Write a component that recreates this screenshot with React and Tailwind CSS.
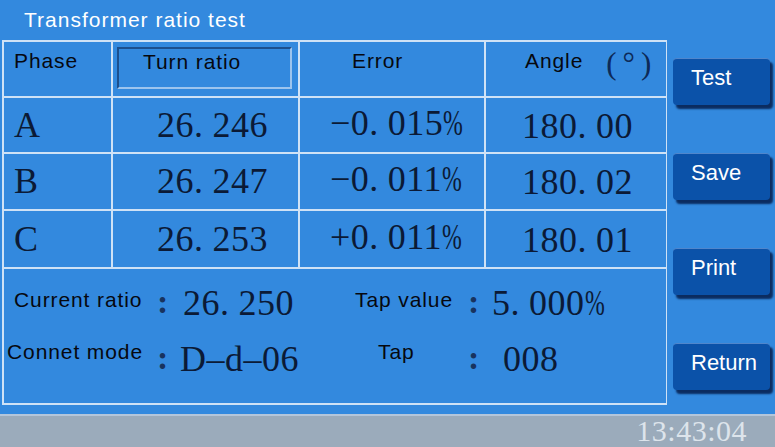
import React from "react";

const SANS = "font-['Liberation_Sans',Arial,sans-serif]";
const SERIF = "font-['Liberation_Serif','Times_New_Roman',serif]";

function Num({ v }) {
  const parts = [];
  v.split("").forEach((c, i) => {
    if (c === ".") {
      parts.push(
        <span key={i} className="mr-[9px]">
          .
        </span>
      );
    } else if (c === "%") {
      parts.push(
        <span key={i} className="inline-block w-[21px] origin-left scale-x-[0.66]">
          %
        </span>
      );
    } else {
      parts.push(<span key={i}>{c}</span>);
    }
  });
  return (
    <span className={`${SERIF} text-[36px] leading-none tracking-[0.5px] text-[#0b1a36] whitespace-nowrap`}>
      {parts}
    </span>
  );
}

function Cell({ children, className = "" }) {
  return <div className={`bg-[#3389de] flex ${className}`}>{children}</div>;
}

function Btn({ label }) {
  return (
    <div className="w-[97px] h-[47px] rounded-[4px] bg-[#0b52a9] border-t border-[#5086cc] shadow-[3px_4px_2px_#0b2c60] flex items-center pl-[18px] pb-[8px]">
      <span className={`${SANS} text-[22px] leading-none text-white`}>{label}</span>
    </div>
  );
}

const rows = [
  { p: "A", r: "26.246", e: "−0.015%", a: "180.00" },
  { p: "B", r: "26.247", e: "−0.011%", a: "180.02" },
  { p: "C", r: "26.253", e: "+0.011%", a: "180.01" },
];

export default function App() {
  const label = `${SANS} text-[21px] leading-none tracking-[0.9px] text-[#06080f]`;
  const colon = `${SERIF} font-bold text-[34px] leading-none text-[#18335e]`;
  return (
    <div className="w-[775px] h-[447px] bg-[#3389de] flex flex-col overflow-hidden">
      <div className="h-[40px] flex items-center pl-[24px] pb-[1px]">
        <span className={`${SANS} text-[21px] leading-none tracking-[1px] text-white`}>
          Transformer ratio test
        </span>
      </div>
      <div className="flex h-[378px]">
        <div className="ml-[2px] w-[665px] h-[365px] bg-[#cfe2f6] p-[2px] grid grid-cols-[107px_185px_184px_180px] grid-rows-[54px_54px_55px_56px_134px] gap-[2px]">
          {/* header */}
          <Cell className="pl-[10px] pt-[8px] items-start">
            <span className={label}>Phase</span>
          </Cell>
          <Cell className="pl-[4px] pr-[6px] pt-[5px] pb-[7px]">
            <div className="w-full h-full border-2 border-t-[#1d4f8c] border-l-[#1d4f8c] border-b-[#9cc4ee] border-r-[#9cc4ee] pl-[24px] pt-[2px]">
              <span className={label}>Turn ratio</span>
            </div>
          </Cell>
          <Cell className="pl-[52px] pt-[8px] items-start">
            <span className={label}>Error</span>
          </Cell>
          <Cell className="pl-[39px] pt-[6px] items-start">
            <span className={label + " mt-[2px]"}>Angle</span>
            <span className={`${SERIF} ml-[23px] text-[31px] leading-none text-[#0d2a58] tracking-[6px]`}>
              (°)
            </span>
          </Cell>
          {/* data rows */}
          {rows.map((r) => (
            <React.Fragment key={r.p}>
              <Cell className="pl-[10px] items-center">
                <span className={`${SERIF} text-[36px] leading-none text-[#0b1a36]`}>{r.p}</span>
              </Cell>
              <Cell className="pl-[44px] items-center">
                <Num v={r.r} />
              </Cell>
              <Cell className="pl-[30px] items-center pb-[4px]">
                <Num v={r.e} />
              </Cell>
              <Cell className="pl-[36px] items-center pt-[2px]">
                <Num v={r.a} />
              </Cell>
            </React.Fragment>
          ))}
          {/* bottom */}
          <div className="col-span-4 bg-[#3389de] flex flex-col pt-[10px] gap-[8px]">
            <div className="h-[48px] flex items-center pl-[10px]">
              <span className={`${label} w-[143px] pb-[6px]`}>Current ratio</span>
              <span className={`${colon} w-[26px] pb-[2px]`}>:</span>
              <span className="w-[172px]">
                <Num v="26.250" />
              </span>
              <span className={`${label} w-[113px] pb-[6px]`}>Tap value</span>
              <span className={`${colon} w-[24px] pb-[2px]`}>:</span>
              <Num v="5.000%" />
            </div>
            <div className="h-[48px] flex items-center pl-[3px]">
              <span className={`${label} w-[150px] pb-[14px]`}>Connet mode</span>
              <span className={`${colon} w-[23px] pb-[2px]`}>:</span>
              <span className="w-[198px]">
                <Num v="D–d–06" />
              </span>
              <span className={`${label} w-[90px] pb-[14px]`}>Tap</span>
              <span className={`${colon} w-[35px] pb-[2px]`}>:</span>
              <Num v="008" />
            </div>
          </div>
        </div>
        <div className="ml-[6px] pt-[18px] flex flex-col gap-[48px]">
          <Btn label="Test" />
          <Btn label="Save" />
          <Btn label="Print" />
          <Btn label="Return" />
        </div>
      </div>
      <div className="h-[2px] bg-[#b4c6da]" />
      <div className="flex-1 bg-[#9babbb] flex items-end justify-end pr-[28px]">
        <span className={`${SERIF} text-[30px] leading-none text-[#dde4eb] tracking-[0.5px] mb-[1px]`}>
          13:43:04
        </span>
      </div>
    </div>
  );
}
